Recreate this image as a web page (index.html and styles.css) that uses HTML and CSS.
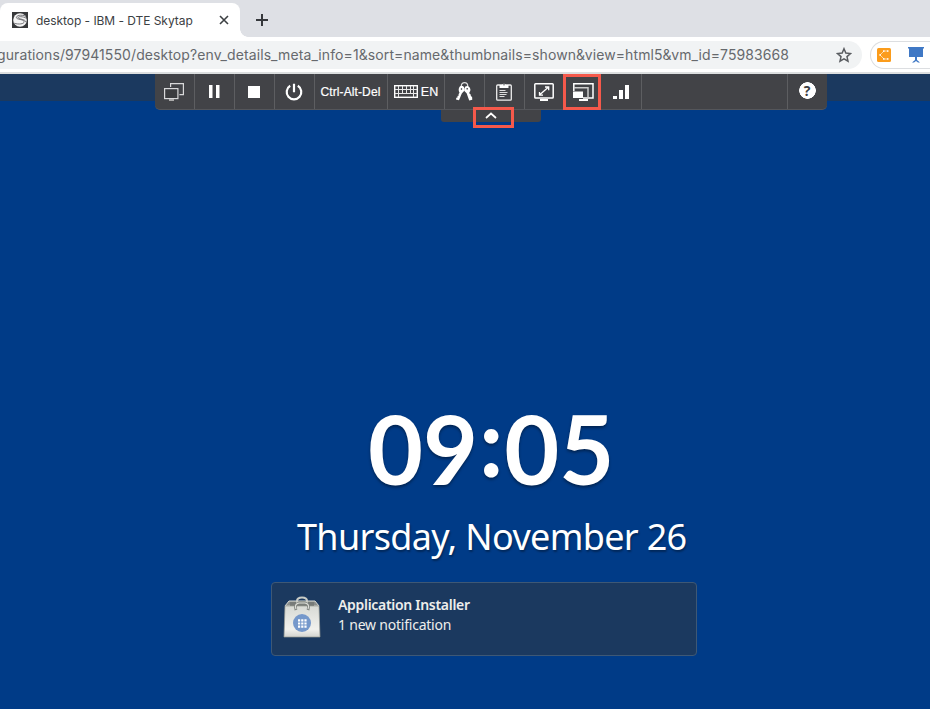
FILE: index.html
```html
<!DOCTYPE html>
<html lang="en">
<head>
<meta charset="utf-8">
<title>desktop - IBM - DTE Skytap</title>
<link rel="stylesheet" href="styles.css">
</head>
<body>
<header class="tabstrip">
  <div class="tab">
    <svg class="favicon" viewBox="0 0 16 16"><rect width="16" height="16" fill="#37383a"/><circle cx="8" cy="8" r="6.8" fill="#f5f5f5"/><path d="M13.8 4.2C9 2.3 4.1 3.4 4.4 5.7c.2 2 7.6 1.5 7.8 4 .1 2.2-5.500 3.100-10 1.500M14.5 6.300C10 4 6 4.500 6.200 5.700c.4 1.600 7.800 1.400 7.700 4.500" fill="none" stroke="#55565a" stroke-width=".8"/></svg>
    <span class="tab-title">desktop - IBM - DTE Skytap</span>
    <svg class="tab-close" viewBox="0 0 10 10"><path d="M1 1l8 8M9 1L1 9" stroke="#3c4043" stroke-width="1.6"/></svg>
  </div>
  <svg class="new-tab" viewBox="0 0 12 12"><path d="M6 0v12M0 6h12" stroke="#36383c" stroke-width="2"/></svg>
</header>
<div class="navbar">
  <div class="address">
    <span class="url">gurations/97941550/desktop?env_details_meta_info=1&amp;sort=name&amp;thumbnails=shown&amp;view=html5&amp;vm_id=75983668</span>
    <svg class="star" viewBox="0 0 14 14"><path d="M7 1.500l1.600 3.800 4.100.4-3.100 2.700.9 4L7 10.300l-3.500 2.100.9-4L1.300 5.700l4.100-.4z" fill="none" stroke="#5a5d61" stroke-width="1.300"/></svg>
  </div>
  <div class="extensions">
    <svg class="ext-flow" viewBox="0 0 14 14"><rect width="14" height="14" rx="1.500" fill="#fb9c1c"/><path d="M10.500 3H7L3 7l4 4h3.500" fill="none" stroke="#ffe6c0" stroke-width=".8"/><g fill="#fff"><rect x="6" y="2.300" width="1.500" height="1.500"/><rect x="10" y="2.300" width="1.500" height="1.500"/><rect x="2.300" y="6.200" width="1.500" height="1.500"/><rect x="6" y="10.200" width="1.500" height="1.500"/><rect x="10" y="10.200" width="1.500" height="1.500"/></g></svg>
    <svg class="ext-board" viewBox="0 0 16 16"><path d="M0 0h16v1.500h-1V10H9v3l3 2.500h-2L8 14l-2 1.500H4L7 13v-3H1V1.500H0z" fill="#3f78c5"/></svg>
  </div>
</div>
<main class="desktop">
  <div class="topbar"></div>
  <nav class="controls">
    <div class="cell"><svg width="20" height="18" viewBox="0 0 20 18"><g fill="none" stroke="#d8d8d9" stroke-width="1.200"><path d="M6.600 4V.6h12.800v11h-4"/><rect x=".6" y="5.600" width="13.300" height="10" fill="#3b3c3f"/></g><path d="M5 16h5v2H5z" fill="#aaa"/></svg></div>
    <div class="cell"><svg width="12" height="14"><path d="M1 0h3.500v13H1zM8 0h3.500v13H8z" fill="#fff"/></svg></div>
    <div class="cell"><svg width="12" height="12"><path d="M0 0h12v12H0z" fill="#fff"/></svg></div>
    <div class="cell"><svg width="18" height="18" viewBox="0 0 18 18"><path d="M5.200 2.800a7.300 7.300 0 1 0 7.600 0M9 .7v8.600" fill="none" stroke="#fff" stroke-width="2.200"/></svg></div>
    <div class="cell cad">Ctrl-Alt-Del</div>
    <div class="cell keyboard"><svg width="24" height="13" viewBox="0 0 24 13"><rect x=".7" y=".7" width="22.600" height="11.600" fill="none" stroke="#fff" stroke-width="1.400"/><path d="M1 4.500h22M1 8.500h22M4.500 1v11M8.500 1v7.500M12.500 1v7.500M16.500 1v7.500M19.500 1v11" stroke="#e8e8e8"/></svg><span>EN</span></div>
    <div class="cell"><svg width="18" height="19" viewBox="0 0 18 19"><circle cx="9.500" cy="3.800" r="3.200" fill="none" stroke="#ddd" stroke-width="1.200"/><g fill="#fff"><path d="M5 4.200q2-1.200 4 .8l.3 3.800-2.500 2.700L4 18.200l-3-.7.300-1.700 1.200-.4v-1.300l1.300-.6-.3-1.300 1-1.500Q2.600 7 5 4.200z"/><path d="M10 4.800q2.500-1.700 4.500.4 2 2.800-.2 5.200l.4 1.500 1.100.6v1.600l1.300.8.2 2.800-3.100.8-2.600-7.200-2.500-2.500z"/></g><path d="M6.500 6.200v1.600M12.200 6v1.600" stroke="#424347" stroke-width="1.300"/></svg></div>
    <div class="cell"><svg width="16" height="19" viewBox="0 0 16 19"><rect x=".7" y="3" width="14.600" height="15.200" rx="1" fill="none" stroke="#eee" stroke-width="1.300"/><path d="M3.500 3h2.700a1.900 1.900 0 0 1 3.600 0h2.700v3h-9z" fill="#fff"/><circle cx="8" cy="2.700" r=".7" fill="#444"/><path d="M3.500 8.500h6M3.500 10.500h8M3.500 12.500h7M3.500 14.500h5" stroke="#ddd"/></svg></div>
    <div class="cell"><svg width="20" height="18" viewBox="0 0 20 18"><rect x=".8" y=".8" width="18.400" height="14.200" rx=".8" fill="none" stroke="#fff" stroke-width="1.500"/><path d="M6 16h8v2H6z" fill="#fff"/><path d="M6 11.500l8-7M11 4h3.700v3.200M5.500 9v3.200H9" fill="none" stroke="#fff" stroke-width="1.300"/></svg></div>
    <div class="cell resize"><svg width="21" height="18" viewBox="0 0 21 18"><path d="M.8 8V.8h19.200v14.200H10" fill="none" stroke="#fff" stroke-width="1.500"/><path d="M1 4.800h14V14" fill="none" stroke="#ccc" stroke-width="1.500"/><path d="M0 8.500h10V15H0zM6 16h9v2H6z" fill="#fff"/></svg></div>
    <div class="cell signal"><svg width="16" height="14"><path d="M0 11h4v3H0zM6 5h4v9H6zM12 0h4v14h-4z" fill="#fff"/></svg></div>
    <div class="cell spacer"></div>
    <div class="cell help">?</div>
  </nav>
  <div class="pull"><svg width="12" height="7" viewBox="0 0 12 7"><path d="M1 6l5-4.500L11 6" fill="none" stroke="#fff" stroke-width="1.700"/></svg></div>
  <div class="mark mark-resize"></div>
  <div class="mark mark-pull"></div>
  <div class="clock"><span>09</span><span class="colon">:</span><span>05</span></div>
  <div class="date">Thursday, November 26</div>
  <section class="notice">
    <svg width="38" height="43" viewBox="0 0 38 43">
      <defs><linearGradient id="paper" x2="0" y2="1"><stop stop-color="#d8dad5"/><stop offset=".75" stop-color="#f1f1ed"/><stop offset="1" stop-color="#d2d3cf"/></linearGradient></defs>
      <path d="M2 10L6 5h26l4 5z" fill="#8b8e8b" stroke="#d7d9d4"/><path d="M7 6h24v4H7z" fill="#777b79"/>
      <path d="M14 7V5q0-3.500 5-3.500T24 5v2" fill="none" stroke="#c9ccc7" stroke-width="2"/>
      <path d="M2 10h34l1 31H1z" fill="url(#paper)" stroke="#989b94" stroke-width=".7"/>
      <path d="M13 14q-2-6 3-7h6q5 1 3 7" fill="none" stroke="#7e827d" stroke-width="2.800"/><path d="M13 13q-2-5 3-6h6q5 1 3 6" fill="none" stroke="#dedfda" stroke-width="1.200"/>
      <circle cx="19" cy="27" r="9" fill="#7598cb"/><path d="M15 24.300h8.600M15 27.500h8.600M15 30.700h8.600" stroke="#fff" stroke-width="2.200" stroke-dasharray="2.200 1"/>
    </svg>
    <div class="notice-copy"><div class="notice-title">Application Installer</div><div class="notice-text">1 new notification</div></div>
  </section>
</main>
</body>
</html>
```
FILE: styles.css
```css
* { box-sizing: border-box; }
body { margin: 0; width: 930px; height: 709px; overflow: hidden; background: #003b87; font-family: Inter, "Liberation Sans", sans-serif; }
svg { display: block; flex: none; }
.tabstrip { height: 37px; background: #dee0e5; display: flex; align-items: flex-end; }
.tab { position: relative; width: 240px; height: 34px; background: #fff; border-radius: 8px 8px 0 0; display: flex; align-items: center; padding-left: 12px; }
.tab::after { content: ""; position: absolute; left: 240px; bottom: 0; width: 8px; height: 8px; background: radial-gradient(circle at 100% 0, transparent 7.5px, #fff 8px); }
.favicon { width: 16px; height: 16px; }
.tab-title { width: 170px; margin-left: 8px; font-size: 12px; color: #3c4043; white-space: nowrap; letter-spacing: -.05px; }
.tab-close { width: 10px; height: 10px; margin-left: 13px; }
.new-tab { width: 12px; height: 12px; margin: 0 0 11px 16px; }
.navbar { height: 37px; padding-top: 4px; background: #fff; display: flex; justify-content: space-between; border-bottom: 2px solid #dcdedf; }
.address { width: 862px; height: 28px; background: #f1f3f4; border-radius: 0 14px 14px 0; display: flex; align-items: center; }
.url { width: 837px; margin: -2px 0 0 -3px; font-size: 14px; color: #66696d; white-space: nowrap; letter-spacing: .096px; }
.star { width: 16px; height: 16px; margin-left: 2px; }
.extensions { width: 60px; height: 28px; border: 1px solid #dcdee1; border-right: 0; border-radius: 14px 0 0 14px; display: flex; align-items: center; padding-left: 6px; gap: 17px; }
.ext-flow { width: 14px; height: 14px; }
.ext-board { width: 16px; height: 16px; }
.desktop { position: relative; height: 635px; display: flex; flex-direction: column; }
.topbar { height: 27px; background: #1b395f; }
.controls { width: 672px; height: 36px; margin: -27px 0 0 155px; background: #424347; border-bottom: 1px solid #55565a; border-radius: 0 0 5px 5px; display: flex; overflow: hidden; }
.cell { width: 40px; padding-right: 1px; border-right: 1px solid #5d5e61; display: flex; align-items: center; justify-content: center; color: #fff; font: 12px "Liberation Sans", sans-serif; flex: none; white-space: nowrap; }
.cell.cad { width: 73px; letter-spacing: .1px; -webkit-text-stroke: .2px #fff; }
.cell.keyboard { width: 57px; padding-right: 0; gap: 3px; font-size: 12.5px; -webkit-text-stroke: .2px #fff; }
.cell.resize { width: 37px; border: 0; }
.cell.signal { width: 40px; }
.cell.spacer { width: 146px; }
.cell.help { font: bold 14px "Open Sans", sans-serif; color: #3d3e42; border: 0; background: radial-gradient(circle at 19.5px 16.5px, #fff 8px, transparent 8.6px); padding-bottom: 2px; width: 39px; }
.pull { width: 100px; height: 12px; margin-left: 441px; background: #424347; border-radius: 0 0 3px 3px; display: flex; justify-content: center; padding-top: 2px; }
.mark { position: absolute; border: 3px solid #f5594b; }
.mark-resize { left: 563px; top: 0; width: 38px; height: 36px; }
.mark-pull { left: 473px; top: 33px; width: 41px; height: 21px; }
.clock { display: flex; margin: 278px 0 0 368px; height: 96px; line-height: 96px; font-family: Lato, sans-serif; font-size: 95px; font-weight: 700; color: #fff; text-shadow: 0 2px 3px #0006; }
.colon { width: 26px; margin-top: -8px; text-align: center; }
.date { margin: 17px 0 0 297px; height: 48px; line-height: 48px; color: #fff; font-family: "Noto Sans", sans-serif; font-size: 36px; letter-spacing: -.66px; white-space: nowrap; text-shadow: 1px 2px 2px #0005; }
.notice { width: 426px; height: 74px; margin: 21px 0 0 271px; border: 1px solid #3e5875; border-radius: 4px; background: #1b395f; display: flex; padding: 13px 0 0 11px; gap: 17px; color: #eeeeec; font-family: "Noto Sans", sans-serif; font-size: 14px; line-height: 20px; white-space: nowrap; }
.notice-copy { margin-top: -1px; }
.notice-title { font-weight: 600; letter-spacing: -.3px; }
.notice-text { letter-spacing: -.22px; }
```
